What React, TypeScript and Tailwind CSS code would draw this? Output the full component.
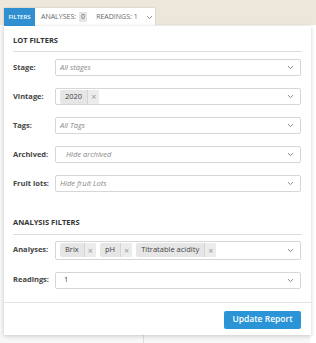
import React from "react";

const Chevron = () => (
  <svg width="7" height="5" viewBox="0 0 7 5" className="shrink-0">
    <path d="M1 1.2 L3.5 3.6 L6 1.2" fill="none" stroke="#888" strokeWidth="1" />
  </svg>
);

const Chip = ({ label }: { label: string }) => (
  <div className="flex h-[14px] items-stretch rounded-[2px] bg-[#e6e6e6] text-[7.5px] text-[#444]">
    <span className="flex items-center px-[5px]">{label}</span>
    <span className="flex items-center border-l border-[#d4d4d4] bg-[#ececec] px-[3px] text-[9px] leading-none text-[#999]">×</span>
  </div>
);

const Field = ({
  label,
  children,
  h = 17,
}: {
  label: string;
  children: React.ReactNode;
  h?: number;
}) => (
  <div className="flex items-center">
    <div className="w-[42px] shrink-0 text-[7.5px] font-bold text-[#444]">{label}</div>
    <div
      className="flex flex-1 items-center justify-between rounded-[2px] border border-[#d6d6d6] bg-white pl-[4px] pr-[6px]"
      style={{ height: h }}
    >
      <div className="flex items-center gap-[4px]">{children}</div>
      <Chevron />
    </div>
  </div>
);

const Placeholder = ({ t, pl = 0 }: { t: string; pl?: number }) => (
  <span className="text-[7.5px] italic text-[#888]" style={{ paddingLeft: pl }}>
    {t}
  </span>
);

export default function App() {
  return (
    <div
      className="relative h-[343px] w-[316px] overflow-hidden bg-[#f7f7f7]"
      style={{ fontFamily: '"Open Sans", sans-serif' }}
    >
      <div className="h-[25px] bg-[#ede6da]" />
      <div className="absolute right-0 top-[25px] h-[318px] w-[6px] bg-white" />
      <div className="absolute left-[143px] top-[335px] h-[8px] w-px bg-[#ddd]" />
      <div className="absolute left-[4px] top-[8px] w-[307px]">
        <div className="flex h-[18px] w-[151px] items-center bg-white shadow-[0_0_2px_rgba(0,0,0,0.15)]">
          <div className="flex h-full w-[31px] items-center justify-center bg-[#2f8fd0] text-[6px] font-semibold text-white">
            FILTERS
          </div>
          <div className="ml-[6px] text-[7px] text-[#666]">ANALYSES:</div>
          <div className="ml-[3px] rounded-[1px] bg-[#e4e4e4] px-[2px] text-[7px] text-[#666]">0</div>
          <div className="ml-[9px] text-[7px] text-[#666]">READINGS: 1</div>
          <div className="ml-[8px]">
            <Chevron />
          </div>
        </div>
        <div className="h-[309px] bg-white shadow-[0_1px_4px_rgba(0,0,0,0.2)]">
          <div className="px-[9px] pt-[9px]">
            <div className="text-[7.5px] font-bold text-[#333]">LOT FILTERS</div>
            <div className="mt-[5px] h-px bg-[#ddd]" />
            <div className="mt-[7px] flex flex-col gap-[12px] pr-[1px]">
              <Field label="Stage:">
                <Placeholder t="All stages" />
              </Field>
              <Field label="Vintage:">
                <Chip label="2020" />
              </Field>
              <Field label="Tags:">
                <Placeholder t="All Tags" />
              </Field>
              <Field label="Archived:">
                <Placeholder t="Hide archived" pl={6} />
              </Field>
              <Field label="Fruit lots:">
                <Placeholder t="Hide fruit Lots" />
              </Field>
            </div>
            <div className="mt-[25px] text-[7.5px] font-bold text-[#333]">ANALYSIS FILTERS</div>
            <div className="mt-[5px] h-px bg-[#ddd]" />
            <div className="mt-[6px] flex flex-col gap-[12px] pr-[1px]">
              <Field label="Analyses:" h={19}>
                <Chip label="Brix" />
                <Chip label="pH" />
                <Chip label="Titratable acidity" />
              </Field>
              <Field label="Readings:">
                <span className="pl-[4px] text-[7.5px] text-[#444]">1</span>
              </Field>
            </div>
          </div>
          <div className="mt-[13px] h-px bg-[#e2e2e2]" />
          <div className="flex justify-end px-[10px] pt-[8px]">
            <div className="flex h-[18px] w-[77px] items-center justify-center rounded-[2px] bg-[#2b94d6] text-[8.5px] font-semibold text-white">
              Update Report
            </div>
          </div>
        </div>
      </div>
    </div>
  );
}
